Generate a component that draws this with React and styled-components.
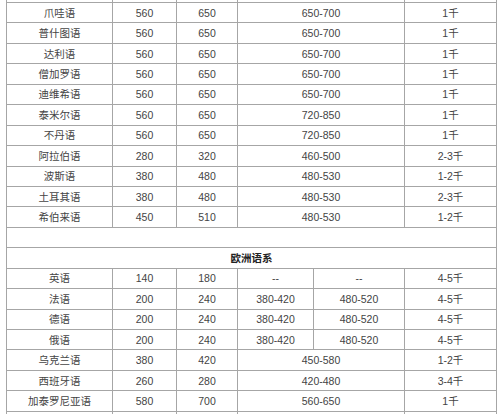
import React from 'react';
import styled, { createGlobalStyle } from 'styled-components';

const GlobalStyle = createGlobalStyle`
  html, body {
    margin: 0;
    padding: 0;
    background: #fff;
  }
`;

// cells: [name, a, b, range, pay] or [name, a, b, low, high, pay]
const asia = [
  ['爪哇语', '560', '650', '650-700', '1千'],
  ['普什图语', '560', '650', '650-700', '1千'],
  ['达利语', '560', '650', '650-700', '1千'],
  ['僧加罗语', '560', '650', '650-700', '1千'],
  ['迪维希语', '560', '650', '650-700', '1千'],
  ['泰米尔语', '560', '650', '720-850', '1千'],
  ['不丹语', '560', '650', '720-850', '1千'],
  ['阿拉伯语', '280', '320', '460-500', '2-3千'],
  ['波斯语', '380', '480', '480-530', '1-2千'],
  ['土耳其语', '380', '480', '480-530', '2-3千'],
  ['希伯来语', '450', '510', '480-530', '1-2千'],
];

const europe = [
  ['英语', '140', '180', '--', '--', '4-5千'],
  ['法语', '200', '240', '380-420', '480-520', '4-5千'],
  ['德语', '200', '240', '380-420', '480-520', '4-5千'],
  ['俄语', '200', '240', '380-420', '480-520', '4-5千'],
  ['乌克兰语', '380', '420', '450-580', '1-2千'],
  ['西班牙语', '260', '280', '420-480', '3-4千'],
  ['加泰罗尼亚语', '580', '700', '560-650', '1千'],
];

function PriceRow({ cells }) {
  if (cells.length === 6) {
    return (
      <Row>
        {cells.map((c, i) => (
          <Cell key={i}>{c}</Cell>
        ))}
      </Row>
    );
  }
  const [name, a, b, range, pay] = cells;
  return (
    <Row>
      <Cell>{name}</Cell>
      <Cell>{a}</Cell>
      <Cell>{b}</Cell>
      <Cell colSpan={2}>{range}</Cell>
      <Cell>{pay}</Cell>
    </Row>
  );
}

export default function App() {
  return (
    <Page>
      <GlobalStyle />
      <PriceTable>
        <colgroup>
          <col style={{ width: 106 }} />
          <col style={{ width: 64 }} />
          <col style={{ width: 61 }} />
          <col style={{ width: 76 }} />
          <col style={{ width: 91 }} />
          <col style={{ width: 92 }} />
        </colgroup>
        <tbody>
          <Row>
            <Cell />
            <Cell />
            <Cell />
            <Cell colSpan={2} />
            <Cell />
          </Row>
          {asia.map((r) => (
            <PriceRow key={r[0]} cells={r} />
          ))}
          <Row>
            <Cell colSpan={6} />
          </Row>
          <Row>
            <Cell colSpan={6} $head>欧洲语系</Cell>
          </Row>
          {europe.map((r) => (
            <PriceRow key={r[0]} cells={r} />
          ))}
          <Row>
            <Cell />
            <Cell />
            <Cell />
            <Cell colSpan={2} />
            <Cell />
          </Row>
        </tbody>
      </PriceTable>
    </Page>
  );
}

const Page = styled.div`
  width: 500px;
  height: 414px;
  overflow: hidden;
  padding-left: 6px;
  box-sizing: border-box;
  background: #fff;
`;

const PriceTable = styled.table`
  width: 490px;
  margin-top: -18.45px;
  border-collapse: collapse;
  table-layout: fixed;
  font-family: "Liberation Sans", "Noto Sans CJK SC", sans-serif;
  font-size: 10.5px;
  color: #444;
`;

const Row = styled.tr`
  height: 20.45px;
`;

const Cell = styled.td`
  border: 1px solid #a6a6a6;
  padding: 0;
  text-align: center;
  vertical-align: middle;
  line-height: 12px;
  font-weight: ${(p) => (p.$head ? 'bold' : 'normal')};
  color: ${(p) => (p.$head ? '#222' : '#444')};
`;
